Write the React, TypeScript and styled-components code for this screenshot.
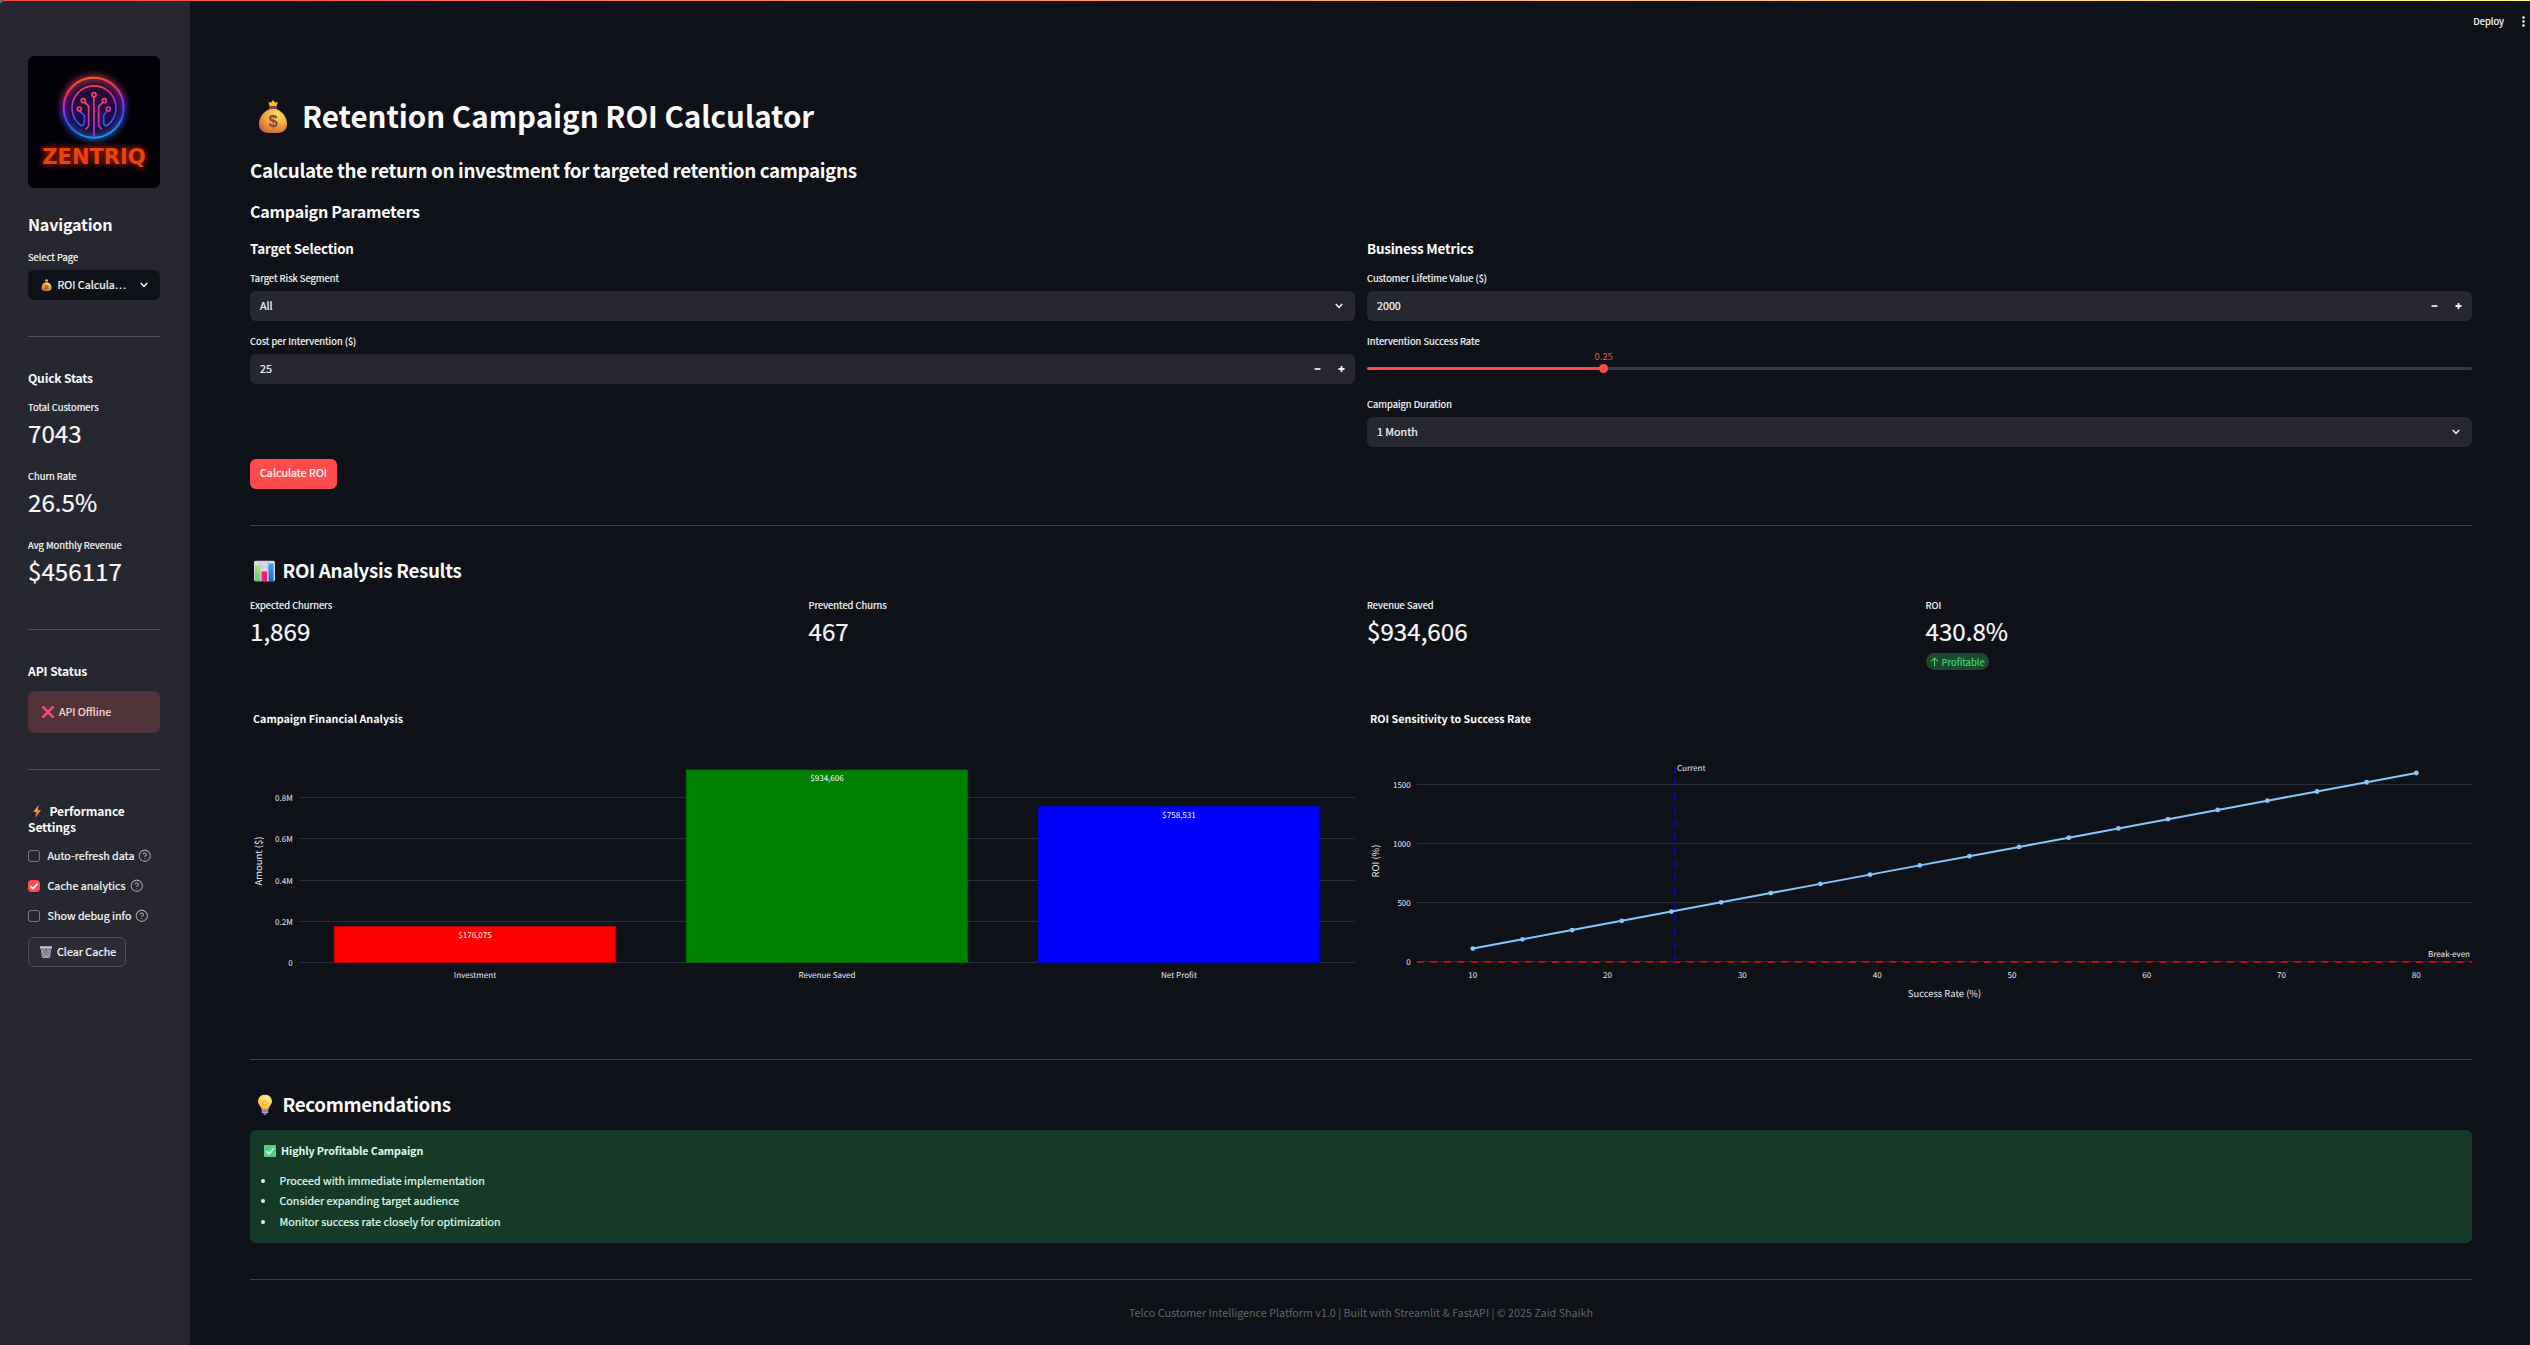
import React from "react";
import styled, { createGlobalStyle } from "styled-components";
import { CircleHelp } from "lucide-react";

const FONT = `"Noto Sans CJK JP", "Noto Sans CJK SC", "Noto Sans", sans-serif`;

/* The Latin glyphs of the CJK family are drawn larger than their nominal size. */
const fs = (n: number) => `${(n * 0.8955).toFixed(3)}px`;

const GlobalStyle = createGlobalStyle`
  * { box-sizing: border-box; }
  body {
    margin: 0;
    background: #0e1117;
    color: #fafafa;
    font-family: ${FONT};
    font-size: ${fs(12)};
    line-height: 18px;
    -webkit-text-stroke: 0.2px currentColor;
  }
  h1, h2, h3, h4, p, ul { margin: 0; padding: 0; }
`;

const Shell = styled.div`
  display: grid;
  grid-template-columns: 190px 1fr;
  height: 1345px;
  position: relative;
  overflow: hidden;
`;

const TopStripe = styled.div`
  position: absolute;
  inset: 0 0 auto 0;
  height: 1px;
  background: linear-gradient(90deg, #ff4b4b, #fffd80);
`;

const Corner = styled.div`
  position: absolute;
  top: 0;
  left: 0;
  border-top: 4px solid #6b6c72;
  border-right: 4px solid transparent;
`;

const Sidebar = styled.aside`
  background: #262730;
  padding: 56px 30px 0 28px;
`;

const Main = styled.main`
  display: flex;
  flex-direction: column;
`;

const Header = styled.header`
  display: flex;
  justify-content: flex-end;
  align-items: center;
  height: 42px;
  gap: 18px;
  padding-right: 5px;
  font-size: ${fs(10.5)};
`;

const Content = styled.div`
  display: flex;
  flex-direction: column;
  padding: 54px 58px 0 60px;
`;

const Heading = styled.div<{ $size: number; $line: number; $mt?: number; $track?: number; $weight?: number }>`
  font-size: ${(p) => fs(p.$size)};
  line-height: ${(p) => p.$line}px;
  min-height: ${(p) => p.$line}px;
  margin-top: ${(p) => p.$mt ?? 0}px;
  font-weight: ${(p) => p.$weight ?? 600};
  letter-spacing: ${(p) => p.$track ?? 0}px;
  white-space: nowrap;
  -webkit-text-stroke: 0;
`;

const IconHeading = styled(Heading)`
  display: flex;
  align-items: center;
`;

const Glyph = styled.svg<{ $ml?: number; $mr?: number; $dy?: number }>`
  flex: none;
  display: inline-block;
  margin-left: ${(p) => p.$ml ?? 0}px;
  margin-right: ${(p) => p.$mr ?? 0}px;
  transform: translateY(${(p) => p.$dy ?? 0}px);
`;

const Label = styled.div<{ $mt?: number }>`
  font-size: ${fs(10.5)};
  line-height: 14px;
  margin-top: ${(p) => p.$mt ?? 0}px;
  white-space: nowrap;
`;

const Rule = styled.hr<{ $mt: number }>`
  border: 0;
  height: 1px;
  width: 100%;
  flex: none;
  margin: ${(p) => p.$mt}px 0 0;
  background: rgba(250, 250, 250, 0.2);
`;

const Field = styled.div<{ $dark?: boolean; $number?: boolean }>`
  display: flex;
  align-items: center;
  height: 30px;
  margin-top: 6px;
  padding: 0 12px ${(p) => (p.$number ? 1 : 0)}px ${(p) => (p.$dark ? 13 : 10)}px;
  border-radius: 6px;
  background: ${(p) => (p.$dark ? "#0e1117" : "#262730")};
  white-space: nowrap;
`;

const FieldValue = styled.span`
  flex: 1;
`;

const Steppers = styled.span`
  display: flex;
  gap: 15px;
  margin-right: -3px;
`;

const Metric = styled.div<{ $mt?: number }>`
  margin-top: ${(p) => p.$mt ?? 0}px;
`;

const MetricValue = styled.div`
  font-size: ${fs(27)};
  line-height: 32px;
  margin-top: 2.5px;
  margin-bottom: -0.5px;
`;

const Badge = styled.span`
  display: inline-flex;
  align-items: center;
  height: 17px;
  margin-top: 7px;
  padding: 0 4px 0 4px;
  gap: 3px;
  border-radius: 9px;
  background: #1b482f;
  color: #3dd56d;
  font-size: ${fs(10.5)};
`;

const ErrorBox = styled.div`
  display: flex;
  align-items: center;
  height: 42px;
  margin-top: 12px;
  padding-left: 14px;
  border-radius: 6px;
  background: #50343a;
  color: #ffdede;
`;

const CheckRow = styled.div`
  display: flex;
  align-items: center;
  height: 18px;
  margin-top: 12px;
  white-space: nowrap;
  svg.help { margin-left: 4px; color: #a3a4a9; flex: none; }
`;

const CheckBox = styled.span<{ $on?: boolean }>`
  display: flex;
  width: 12px;
  height: 12px;
  margin-right: 7.5px;
  border-radius: 3px;
  border: 1px solid ${(p) => (p.$on ? "#ff4b4b" : "#7b7c83")};
  background: ${(p) => (p.$on ? "#ff4b4b" : "transparent")};
`;

const GhostButton = styled.button`
  display: flex;
  align-items: center;
  width: 98px;
  height: 30px;
  margin-top: 12px;
  padding: 0 0 0 11px;
  border: 1px solid #4c4d56;
  border-radius: 6px;
  background: #2b2c36;
  color: #fafafa;
  font: inherit;
  white-space: nowrap;
`;

const PrimaryButton = styled.button`
  width: 87px;
  height: 30px;
  margin-top: 12px;
  padding: 0 0 2px;
  border: 0;
  border-radius: 6px;
  background: #ff4b4b;
  color: #fafafa;
  font: inherit;
  white-space: nowrap;
`;

const TwoCols = styled.div<{ $mt: number }>`
  display: grid;
  grid-template-columns: 1fr 1fr;
  gap: 12px;
  margin-top: ${(p) => p.$mt}px;
`;

const FourCols = styled.div`
  display: grid;
  grid-template-columns: repeat(4, 1fr);
  gap: 12px;
  margin-top: 15px;
  height: 72px;
`;

const SliderArea = styled.div`
  height: 36px;
  padding-top: 19px;
`;

const Track = styled.div`
  position: relative;
  height: 3px;
  border-radius: 2px;
  background: #373942;
`;

const Fill = styled.div`
  height: 3px;
  border-radius: 2px;
  background: #ff4b4b;
`;

const Thumb = styled.div`
  position: absolute;
  top: -3px;
  width: 9px;
  height: 9px;
  margin-left: -4.5px;
  border-radius: 50%;
  background: #ff4b4b;
`;

const ThumbValue = styled.span`
  position: absolute;
  left: 50%;
  bottom: 10px;
  transform: translateX(-50%);
  font-size: ${fs(10.5)};
  line-height: 14px;
  color: #ff4b4b;
  -webkit-text-stroke: 0;
`;

const Chart = styled.svg`
  display: block;
  overflow: visible;
  font-family: ${FONT};
  font-size: ${fs(9)};
  fill: #e6eaf1;
  text-rendering: geometricPrecision;
`;

const SuccessBox = styled.div`
  height: 113px;
  margin-top: 13px;
  padding: 12px 14px;
  border-radius: 6px;
  background: #173928;
  color: #dffde9;
`;

const SuccessTitle = styled.div`
  display: flex;
  align-items: center;
  height: 18px;
  font-weight: 700;
  letter-spacing: -0.12px;
  -webkit-text-stroke: 0;
`;

const Bullets = styled.ul`
  margin-top: 10.5px;
  padding: 0;
  list-style: none;
`;

const Bullet = styled.li`
  display: flex;
  align-items: center;
  height: 20.5px;
  margin-left: -3px;
  gap: 14.5px;
  &::before {
    content: "";
    width: 4px;
    height: 4px;
    border-radius: 50%;
    background: #dffde9;
  }
`;

const Footer = styled.footer`
  margin-top: 24px;
  text-align: center;
  color: #626468;
  -webkit-text-stroke: 0;
`;

const Chevron = () => (
  <Glyph width="8" height="6" viewBox="0 0 8 6">
    <path d="M0.8 1 L4 4.4 L7.2 1" fill="none" stroke="#fafafa" strokeWidth="1.5" />
  </Glyph>
);

const StepIcons = () => (
  <Steppers>
    <Glyph width="9" height="9" viewBox="0 0 9 9"><path d="M1.5 5h6" stroke="#d0d1d4" strokeWidth="2" /></Glyph>
    <Glyph width="9" height="9" viewBox="0 0 9 9"><path d="M1.5 5h6M4.5 2v6" stroke="#fafafa" strokeWidth="1.8" /></Glyph>
  </Steppers>
);

const MoneyBag = ({ w, h, ml, mr, sign = "$" }: { w: number; h: number; ml: number; mr: number; sign?: string }) => (
  <Glyph width={w} height={h} viewBox="0 0 28 33" $ml={ml} $mr={mr}>
    <defs>
      <radialGradient id="bag" cx="0.65" cy="0.25" r="0.85">
        <stop offset="0" stopColor="#ffdc62" />
        <stop offset="0.5" stopColor="#f5a63c" />
        <stop offset="1" stopColor="#bf6238" />
      </radialGradient>
    </defs>
    <path d="M9.5 2.2 L12 2.4 L14 0 L16 2.4 L18.7 2 L17.6 6.6 H10.6 Z" fill="#fbb92f" />
    <path d="M10.7 9 C4 12 0 17.5 0 24 C0 30 4 33 10 33 H18 C24 33 28 30 28 24 C28 17.5 24 12 17.5 9 Z" fill="url(#bag)" />
    <rect x="10" y="6.2" width="8" height="2.8" rx="1.2" fill="#7b4a48" />
    <text x="14" y="27.4" textAnchor="middle" fontFamily="Liberation Sans, sans-serif" fontWeight="700" fontSize="16.5" fill="#7b4a48">{sign}</text>
  </Glyph>
);

const ChartEmoji = () => (
  <Glyph width="21" height="21" viewBox="0 0 21 21" $ml={4} $mr={7.5} $dy={0.5}>
    <defs>
      <linearGradient id="g1" x2="0" y2="1"><stop stopColor="#b4e84e" /><stop offset="1" stopColor="#4fc98b" /></linearGradient>
      <linearGradient id="g2" x2="0" y2="1"><stop stopColor="#39a8ef" /><stop offset="1" stopColor="#2464c8" /></linearGradient>
    </defs>
    <rect width="21" height="21" rx="2" fill="#dcd5e6" />
    <path d="M0 6.5h21M0 13h21M6.5 0v21M14 0v21" stroke="#bcb2cb" strokeWidth="0.6" />
    <rect x="0.8" y="5" width="5" height="16" fill="url(#g1)" />
    <rect x="7.6" y="11" width="5.4" height="10" fill="#e5256f" />
    <rect x="14.6" y="3" width="5" height="18" fill="url(#g2)" />
  </Glyph>
);

const Bulb = () => (
  <Glyph width="14" height="21" viewBox="0 0 14 21" $ml={7.5} $mr={11} $dy={0.5}>
    <defs>
      <radialGradient id="bulb" cx="0.6" cy="0.3" r="0.7"><stop stopColor="#fff0a0" /><stop offset="1" stopColor="#fdb92e" /></radialGradient>
    </defs>
    <path d="M7 0 C3 0 0 3 0 6.8 C0 10.4 3.2 11.8 3.6 15 H10.4 C10.8 11.8 14 10.4 14 6.8 C14 3 11 0 7 0Z" fill="url(#bulb)" />
    <circle cx="7" cy="8.4" r="2.4" fill="none" stroke="#f3a52e" strokeWidth="0.9" />
    <path d="M3.8 15h6.4v3.4H3.8z" fill="#b7a4d0" />
    <path d="M3.8 16.8h6.4" stroke="#76619b" strokeWidth="0.8" />
    <path d="M5 18.4h4l-1 2.3H6z" fill="#8067a8" />
  </Glyph>
);

const CrossEmoji = () => (
  <Glyph width="12" height="12" viewBox="0 0 12 12" $mr={5}>
    <path d="M1.2 1.2 L10.8 10.8 M10.8 1.2 L1.2 10.8" stroke="#f94a80" strokeWidth="2.5" strokeLinecap="round" />
  </Glyph>
);

const Bolt = () => (
  <Glyph width="8" height="13" viewBox="0 0 8 13" $ml={5} $mr={8.5} style={{ verticalAlign: "-2px" }}>
    <defs><linearGradient id="bolt" x2="0" y2="1"><stop stopColor="#ffbe4a" /><stop offset="1" stopColor="#f0553d" /></linearGradient></defs>
    <path d="M5.6 0 L0.2 7 H3.2 L2 13 L8 5.2 H4.9 Z" fill="url(#bolt)" />
  </Glyph>
);

const Bin = () => (
  <Glyph width="12" height="12" viewBox="0 0 12 12" $mr={5}>
    <path d="M0 0.3h12v2.2H0z" fill="#cfc9d8" />
    <path d="M0.8 2.5h10.4L10 12H2z" fill="#a79fb5" />
    <path d="M2 3l7.5 8.5M5 3l5 5.5M10 3l-7.5 8.5M7 3l-5 5.5" stroke="#5d566e" strokeWidth="0.8" />
  </Glyph>
);

const CheckEmoji = () => (
  <Glyph width="12" height="12" viewBox="0 0 12 12" $mr={5}>
    <rect width="12" height="12" rx="0.8" fill="#4fd089" />
    <path d="M2.4 6.2 L5 8.8 L9.8 3.2" fill="none" stroke="#fff" strokeWidth="1.5" />
  </Glyph>
);

const Logo = () => (
  <svg width="132" height="132" viewBox="84 168 396 396" style={{ display: "block" }}>
    <defs>
      <linearGradient id="ring" gradientUnits="userSpaceOnUse" x1="262" y1="232" x2="290" y2="415">
        <stop offset="0" stopColor="#ff5a20" />
        <stop offset="0.22" stopColor="#f8305a" />
        <stop offset="0.45" stopColor="#9a32e8" />
        <stop offset="0.68" stopColor="#2c50f2" />
        <stop offset="1" stopColor="#10a4f8" />
      </linearGradient>
      <linearGradient id="tree" gradientUnits="userSpaceOnUse" x1="225" y1="280" x2="310" y2="400">
        <stop offset="0" stopColor="#ff5a2a" />
        <stop offset="0.5" stopColor="#f0327a" />
        <stop offset="1" stopColor="#8a3cf0" />
      </linearGradient>
      <radialGradient id="halo" cx="0.5" cy="0.5" r="0.5">
        <stop offset="0" stopColor="#24104a" />
        <stop offset="0.7" stopColor="#260a46" stopOpacity="0.8" />
        <stop offset="1" stopColor="#04030a" stopOpacity="0" />
      </radialGradient>
      <filter id="glow" x="-30%" y="-60%" width="160%" height="220%"><feGaussianBlur stdDeviation="9" /></filter>
    </defs>
    <rect x="84" y="168" width="396" height="396" rx="18" fill="#030208" />
    <circle cx="281" cy="323" r="122" fill="url(#halo)" />
    <circle cx="281" cy="323" r="90" fill="none" stroke="url(#ring)" strokeWidth="12" filter="url(#glow)" opacity="0.75" />
    <circle cx="281" cy="323" r="90" fill="none" stroke="url(#ring)" strokeWidth="6" />
    <g fill="none" strokeWidth="5">
      <path d="M238 333 L253 346 V366 Q252 378 243 377 A66 66 0 1 1 321 377 Q311 378 311 366 V346 L321 333" stroke="url(#ring)" />
      <g stroke="url(#tree)">
        <path d="M255 307 L266 319 V378 L257 388" />
        <path d="M308 307 L296 319 V378 L306 388" />
        <path d="M281.5 291 L282 410" />
        <circle cx="282" cy="284" r="6" />
        <circle cx="250" cy="302" r="6" />
        <circle cx="313" cy="302" r="6" />
        <circle cx="238" cy="327" r="6" />
        <circle cx="325" cy="327" r="6" />
      </g>
    </g>
    <g fontFamily="DejaVu Sans, sans-serif" fontWeight="700" fontSize="61">
      <text x="127" y="491" textLength="310" lengthAdjust="spacingAndGlyphs" fill="#c02400" stroke="#b02200" strokeWidth="6" filter="url(#glow)" opacity="0.8">ZENTRIQ</text>
      <text x="127" y="491" textLength="310" lengthAdjust="spacingAndGlyphs" fill="#ea440a" stroke="none">ZENTRIQ</text>
    </g>
  </svg>
);

const bars = [
  { name: "Investment", value: 176075, color: "#ff0000", edge: "#b3040a" },
  { name: "Revenue Saved", value: 934606, color: "#008000", edge: "#036008" },
  { name: "Net Profit", value: 758531, color: "#0000ff", edge: "#0303b9" },
];

const BarChart = () => {
  const zero = 262.7;
  const unit = 41.25;
  return (
    <Chart width="1105" height="323" viewBox="0 0 1105 323">
      <text x="3" y="23" fontSize={fs(12)} fontWeight="700" fill="#fafafa" textLength="150">Campaign Financial Analysis</text>
      {["0", "0.2M", "0.4M", "0.6M", "0.8M"].map((t, i) => {
        const y = Math.floor(zero - i * unit);
        return (
          <g key={t}>
            <rect x="49" y={y} width="1056" height="1" fill="#2a2c36" />
            <text x="42.8" y={y + 4.3} textAnchor="end">{t}</text>
          </g>
        );
      })}
      {bars.map((b, i) => {
        const h = (b.value / 200000) * unit;
        const cx = 49 + 352 * (i + 0.5);
        return (
          <g key={b.name}>
            <rect x={cx - 140.8} y={zero - h} width="281.6" height={h} fill={b.color} stroke={b.edge} strokeWidth="0.75" />
            <text x={cx} y={zero - h + 11.5} textAnchor="middle" fill="#fff">{"$" + b.value.toLocaleString("en-US")}</text>
            <text x={cx} y="278" textAnchor="middle">{b.name}</text>
          </g>
        );
      })}
      <text transform="translate(12 161) rotate(-90)" textAnchor="middle" fontSize={fs(10.5)} textLength="49">Amount ($)</text>
    </Chart>
  );
};

const LineChart = () => {
  const px = (s: number) => 105.8 + (s - 10) * 13.479;
  const py = (r: number) => 261.8 - r * 0.1181;
  const pts = Array.from({ length: 20 }, (_, i) => {
    const s = 10 + (70 * i) / 19;
    return [px(s), py(((37384.24 * s) / 176075 - 1) * 100)];
  });
  return (
    <Chart width="1105" height="323" viewBox="0 0 1105 323">
      <text x="3" y="23" fontSize={fs(12)} fontWeight="700" fill="#fafafa" textLength="161">ROI Sensitivity to Success Rate</text>
      {[0, 500, 1000, 1500].map((v) => (
        <g key={v}>
          <rect x="50" y={Math.floor(py(v))} width="1055" height="1" fill="#2a2c36" />
          <text x="43.8" y={Math.floor(py(v)) + 4.3} textAnchor="end">{v}</text>
        </g>
      ))}
      {[10, 20, 30, 40, 50, 60, 70, 80].map((v) => (
        <text key={v} x={px(v)} y="278" textAnchor="middle">{v}</text>
      ))}
      <polyline points={pts.map((p) => p.join(",")).join(" ")} fill="none" stroke="#83c9ff" strokeWidth="2" />
      {pts.map((p, i) => <circle key={i} cx={p[0]} cy={p[1]} r="2.4" fill="#83c9ff" />)}
      <path d="M50 262H1105" stroke="#f00" strokeWidth="1.6" strokeDasharray="6.75 6.75" />
      <path d="M308 262V67" stroke="#00f" strokeWidth="1.6" strokeDasharray="6.75 6.75" />
      <text x="310" y="71">Current</text>
      <text x="1103" y="256.7" textAnchor="end">Break-even</text>
      <text x="577.5" y="296.7" textAnchor="middle" fontSize={fs(10.5)}>Success Rate (%)</text>
      <text transform="translate(11.5 161) rotate(-90)" textAnchor="middle" fontSize={fs(10.5)}>ROI (%)</text>
    </Chart>
  );
};

const sideStats = [
  ["Total Customers", "7043"],
  ["Churn Rate", "26.5%"],
  ["Avg Monthly Revenue", "$456117"],
];

const results = [
  ["Expected Churners", "1,869"],
  ["Prevented Churns", "467"],
  ["Revenue Saved", "$934,606"],
  ["ROI", "430.8%"],
];

const toggles: [string, boolean][] = [
  ["Auto-refresh data", false],
  ["Cache analytics", true],
  ["Show debug info", false],
];

export default function App() {
  const position = 21.42;
  return (
    <>
      <GlobalStyle />
      <Shell>
        <Sidebar>
          <Logo />
          <Heading as="h2" $size={18} $line={22} $mt={25} $track={-0.2}>Navigation</Heading>
          <Label $mt={15}>Select Page</Label>
          <Field $dark>
            <MoneyBag w={11} h={12} ml={0} mr={5.5} sign="₿" />
            <FieldValue>ROI Calcula…</FieldValue>
            <Chevron />
          </Field>
          <Rule $mt={36} />
          <Heading as="h3" $size={13.5} $line={16} $mt={33} $track={-0.18}>Quick Stats</Heading>
          {sideStats.map(([k, v], i) => (
            <Metric key={k} $mt={i ? 21 : 14}>
              <Label>{k}</Label>
              <MetricValue>{v}</MetricValue>
            </Metric>
          ))}
          <Rule $mt={43} />
          <Heading as="h3" $size={13.5} $line={16} $mt={33} $track={-0.1}>API Status</Heading>
          <ErrorBox><CrossEmoji />API Offline</ErrorBox>
          <Rule $mt={36} />
          <Heading as="h3" $size={13.5} $line={16} $mt={33} $track={-0.15}><Bolt />Performance<br />Settings</Heading>
          {toggles.map(([name, on]) => (
            <CheckRow key={name}>
              <CheckBox $on={on}>
                {on && (
                  <svg width="10" height="10" viewBox="0 0 10 10"><path d="M1.5 5.2 L4 7.6 L8.6 2.6" fill="none" stroke="#fff" strokeWidth="1.8" /></svg>
                )}
              </CheckBox>
              {name}
              <CircleHelp className="help" size={13.5} strokeWidth={1.8} />
            </CheckRow>
          ))}
          <GhostButton><Bin />Clear Cache</GhostButton>
        </Sidebar>

        <Main>
          <Header>
            <span>Deploy</span>
            <svg width="3" height="11" viewBox="0 0 3 11" fill="#fafafa">
              <circle cx="1.5" cy="1.5" r="1.3" /><circle cx="1.5" cy="5.5" r="1.3" /><circle cx="1.5" cy="9.5" r="1.3" />
            </svg>
          </Header>
          <Content>
            <IconHeading as="h1" $size={33} $line={40} $weight={700} $track={-0.03}>
              <MoneyBag w={28} h={33} ml={9} mr={15} />Retention Campaign ROI Calculator
            </IconHeading>
            <Heading as="h3" $size={21} $line={26} $mt={21} $track={-0.37}>Calculate the return on investment for targeted retention campaigns</Heading>
            <Heading as="h4" $size={18} $line={22} $mt={17} $track={-0.27}>Campaign Parameters</Heading>

            <TwoCols $mt={17}>
              <div>
                <Heading $size={15} $line={18} $track={-0.2}>Target Selection</Heading>
                <Label $mt={14}>Target Risk Segment</Label>
                <Field><FieldValue>All</FieldValue><Chevron /></Field>
                <Label $mt={13}>Cost per Intervention ($)</Label>
                <Field $number><FieldValue>25</FieldValue><StepIcons /></Field>
              </div>
              <div>
                <Heading $size={15} $line={18} $track={-0.2}>Business Metrics</Heading>
                <Label $mt={14}>Customer Lifetime Value ($)</Label>
                <Field $number><FieldValue>2000</FieldValue><StepIcons /></Field>
                <Label $mt={13}>Intervention Success Rate</Label>
                <SliderArea>
                  <Track>
                    <Fill style={{ width: `${position}%` }} />
                    <Thumb style={{ left: `${position}%` }}><ThumbValue>0.25</ThumbValue></Thumb>
                  </Track>
                </SliderArea>
                <Label $mt={13}>Campaign Duration</Label>
                <Field><FieldValue>1 Month</FieldValue><Chevron /></Field>
              </div>
            </TwoCols>

            <PrimaryButton>Calculate ROI</PrimaryButton>
            <Rule $mt={36} />

            <IconHeading as="h3" $size={21} $line={26} $mt={31} $track={-0.35}><ChartEmoji />ROI Analysis Results</IconHeading>
            <FourCols>
              {results.map(([k, v]) => (
                <Metric key={k}>
                  <Label>{k}</Label>
                  <MetricValue>{v}</MetricValue>
                  {k === "ROI" && (
                    <Badge>
                      <svg width="9" height="10" viewBox="0 0 9 10"><path d="M4.5 9.2V1.2M1.2 4.4L4.5 1.1L7.8 4.4" fill="none" stroke="#3dd56d" strokeWidth="1.1" /></svg>
                      Profitable
                    </Badge>
                  )}
                </Metric>
              ))}
            </FourCols>

            <TwoCols $mt={30}>
              <BarChart />
              <LineChart />
            </TwoCols>
            <Rule $mt={36} />

            <IconHeading as="h3" $size={21} $line={26} $mt={31} $track={-0.35}><Bulb />Recommendations</IconHeading>
            <SuccessBox>
              <SuccessTitle><CheckEmoji />Highly Profitable Campaign</SuccessTitle>
              <Bullets>
                <Bullet>Proceed with immediate implementation</Bullet>
                <Bullet>Consider expanding target audience</Bullet>
                <Bullet>Monitor success rate closely for optimization</Bullet>
              </Bullets>
            </SuccessBox>
            <Rule $mt={36} />
            <Footer>Telco Customer Intelligence Platform v1.0 | Built with Streamlit &amp; FastAPI | © 2025 Zaid Shaikh</Footer>
          </Content>
        </Main>
        <TopStripe />
        <Corner />
      </Shell>
    </>
  );
}
